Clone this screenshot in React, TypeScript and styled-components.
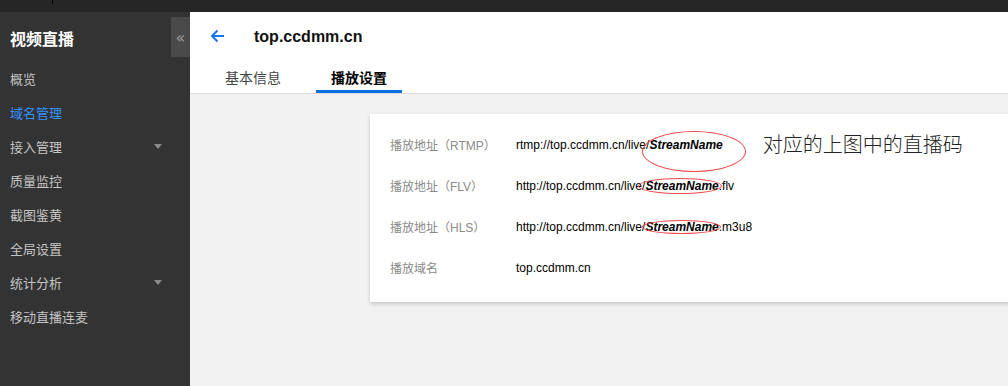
import { styled, createGlobalStyle } from 'styled-components'

const GlobalStyle = createGlobalStyle`
  html, body {
    margin: 0;
    padding: 0;
    background: #f2f2f2;
  }
  body {
    font-family: "Liberation Sans", "Noto Sans CJK SC", sans-serif;
  }
`

const Page = styled.div`
  width: 1008px;
  height: 386px;
  display: flex;
  flex-direction: column;
  overflow: hidden;
`
const TopBar = styled.div`
  height: 12px;
  flex: none;
  background: #262626;
  position: relative;

  &::before {
    content: '';
    position: absolute;
    left: 52px;
    top: 0;
    width: 1px;
    height: 4px;
    background: #000;
  }
`
const Body = styled.div`
  flex: 1;
  display: flex;
  min-height: 0;
`
const Sidebar = styled.aside`
  width: 190px;
  flex: none;
  background: #333333;
  position: relative;
`
const SideTitle = styled.div`
  height: 49px;
  box-sizing: border-box;
  padding: 16px 0 0 10px;
  line-height: 20px;
  font-size: 16px;
  font-weight: bold;
  color: #fff;
  font-family: "Noto Sans CJK SC", sans-serif;
`
const Collapse = styled.div`
  position: absolute;
  right: 0;
  top: 5px;
  width: 19px;
  height: 40px;
  background: #4a4a4a;
  color: #9a9a9a;
  font-size: 16px;
  display: flex;
  align-items: center;
  justify-content: center;
  font-family: "DejaVu Sans", sans-serif;
`
const MenuItem = styled.div<{ $active?: boolean }>`
  height: 34px;
  display: flex;
  align-items: center;
  padding: 0 28px 0 10px;
  font-size: 13px;
  color: ${p => (p.$active ? '#3391ff' : '#c4c4c4')};
  font-family: "Noto Sans CJK SC", sans-serif;
`
const Caret = styled.span`
  margin-left: auto;
  width: 0;
  height: 0;
  border-left: 4px solid transparent;
  border-right: 4px solid transparent;
  border-top: 5px solid #8a8a8a;
`
const Main = styled.main`
  flex: 1;
  display: flex;
  flex-direction: column;
  min-width: 0;
`
const Header = styled.header`
  background: #fff;
  border-bottom: 1px solid #dcdcdc;
  padding-left: 20px;
`
const TitleRow = styled.div`
  height: 50px;
  display: flex;
  align-items: center;
  gap: 29px;
`
const Back = styled.svg`
  width: 15px;
  height: 14px;
  margin-top: -2px;
`
const Domain = styled.h1`
  margin: 0;
  font-size: 16px;
  font-weight: bold;
  color: #111;
  font-family: "Liberation Sans", Arial, sans-serif;
`
const Tabs = styled.div`
  display: flex;
  gap: 20px;
  height: 31px;
`
const Tab = styled.div<{ $active?: boolean }>`
  padding: 0 15px;
  display: flex;
  align-items: center;
  box-sizing: border-box;
  padding-top: 1px;
  font-size: 14px;
  font-family: "Noto Sans CJK SC", sans-serif;
  font-weight: ${p => (p.$active ? 'bold' : 'normal')};
  color: ${p => (p.$active ? '#000' : '#444')};
  border-bottom: 3px solid ${p => (p.$active ? '#0a6ee6' : 'transparent')};
`
const Content = styled.div`
  flex: 1;
  background: #f2f2f2;
  padding: 20px 0 0 180px;
  overflow: hidden;
`
const Card = styled.section`
  width: 700px;
  background: #fff;
  box-shadow: 0 2px 4px rgba(0, 0, 0, 0.18);
  padding: 10px 0 14px 20px;
  box-sizing: border-box;
`
const Row = styled.div`
  height: 41px;
  display: flex;
  align-items: center;
  font-size: 12px;
`
const Label = styled.div`
  width: 126px;
  flex: none;
  color: #8a8a8a;
  font-family: "Liberation Sans", "Noto Sans CJK SC", sans-serif;
`
const Value = styled.div`
  color: #000;
  font-family: "Liberation Sans", Arial, sans-serif;
  white-space: nowrap;
`
const Stream = styled.span`
  position: relative;
  font-weight: bold;
  font-style: italic;
`
const Ring = styled.span<{ $l: number; $r: number; $t: number; $b: number }>`
  position: absolute;
  left: ${p => p.$l}px;
  right: ${p => p.$r}px;
  top: ${p => p.$t}px;
  bottom: ${p => p.$b}px;
  border: 1px solid #ee4a4a;
  border-radius: 50%;
  pointer-events: none;
`
const Note = styled.span`
  margin-left: 40px;
  font-size: 20px;
  color: #222;
  font-family: "Noto Sans CJK SC", sans-serif;
  font-weight: 300;
  margin-top: -2px;
`

export default function App() {
  return (
    <Page>
      <GlobalStyle />
      <TopBar />
      <Body>
        <Sidebar>
          <SideTitle>视频直播</SideTitle>
          <Collapse>«</Collapse>
          <MenuItem>概览</MenuItem>
          <MenuItem $active>域名管理</MenuItem>
          <MenuItem>
            接入管理
            <Caret />
          </MenuItem>
          <MenuItem>质量监控</MenuItem>
          <MenuItem>截图鉴黄</MenuItem>
          <MenuItem>全局设置</MenuItem>
          <MenuItem>
            统计分析
            <Caret />
          </MenuItem>
          <MenuItem>移动直播连麦</MenuItem>
        </Sidebar>
        <Main>
          <Header>
            <TitleRow>
              <Back viewBox="0 0 15 14">
                <path d="M14 7H2M7.5 1.5L2 7l5.5 5.5" fill="none" stroke="#1677e8" strokeWidth="2" />
              </Back>
              <Domain>top.ccdmm.cn</Domain>
            </TitleRow>
            <Tabs>
              <Tab>基本信息</Tab>
              <Tab $active>播放设置</Tab>
            </Tabs>
          </Header>
          <Content>
            <Card>
              <Row>
                <Label>播放地址（RTMP）</Label>
                <Value>
                  rtmp://top.ccdmm.cn/live/
                  <Stream>
                    StreamName
                    <Ring $l={-7} $r={-23} $t={-7} $b={-20} />
                  </Stream>
                </Value>
                <Note>对应的上图中的直播码</Note>
              </Row>
              <Row>
                <Label>播放地址（FLV）</Label>
                <Value>
                  http://top.ccdmm.cn/live/
                  <Stream>
                    StreamName
                    <Ring $l={-7} $r={-3} $t={-1} $b={-1} />
                  </Stream>
                  .flv
                </Value>
              </Row>
              <Row>
                <Label>播放地址（HLS）</Label>
                <Value>
                  http://top.ccdmm.cn/live/
                  <Stream>
                    StreamName
                    <Ring $l={-3} $r={-2} $t={0} $b={0} />
                  </Stream>
                  .m3u8
                </Value>
              </Row>
              <Row>
                <Label>播放域名</Label>
                <Value>top.ccdmm.cn</Value>
              </Row>
            </Card>
          </Content>
        </Main>
      </Body>
    </Page>
  )
}
